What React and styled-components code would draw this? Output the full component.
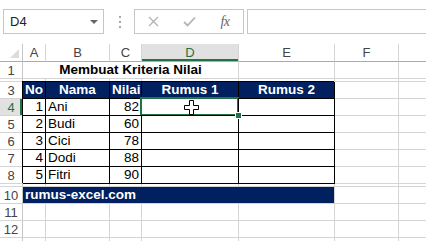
import React from 'react';
import styled, { createGlobalStyle, css } from 'styled-components';

const GlobalStyle = createGlobalStyle`
  html, body {
    margin: 0;
    padding: 0;
    background: #fff;
  }
  body {
    font-family: "Liberation Sans", Arial, sans-serif;
  }
`

const COLS = [23, 23, 64, 32, 97, 96, 64, 64];
const template = COLS.map(w => `${w}px`).join(' ');
const GREEN = '#217346';
const NAVY = '#002060';

const Window = styled.div`
  width: 426px;
  height: 241px;
  overflow: hidden;
  background: #fff;
`
const FormulaBar = styled.div`
  box-sizing: border-box;
  height: 44px;
  padding: 9px 0 0 3px;
  display: flex;
  align-items: flex-start;
`
const Field = styled.div`
  box-sizing: border-box;
  height: 25px;
  border: 1px solid #c6c6c6;
  flex-shrink: 0;
  display: flex;
  align-items: center;
`
const NameBox = styled(Field)`
  width: 101px;
  padding: 0 5px 0 6px;
  justify-content: space-between;
  font-size: 13px;
  color: #222;
`
const Caret = styled.span`
  width: 0;
  height: 0;
  border-left: 4px solid transparent;
  border-right: 4px solid transparent;
  border-top: 4px solid #666;
`
const Grip = styled.div`
  margin: 0 13px 0 15px;
  height: 25px;
  display: flex;
  flex-direction: column;
  justify-content: center;
  gap: 3px;
`
const GripDot = styled.span`
  width: 2px;
  height: 2px;
  background: #a8a8a8;
`
const ButtonGroup = styled(Field)`
  width: 110px;
`
const BarButton = styled.div`
  width: 36px;
  height: 100%;
  display: flex;
  align-items: center;
  justify-content: center;
`
const Fx = styled.span`
  font-family: "Liberation Serif", "Times New Roman", serif;
  font-style: italic;
  font-size: 14px;
  color: #666;
  letter-spacing: -0.5px;
`
const FormulaInput = styled(Field)`
  margin-left: 3px;
  width: 220px;
`

const Sheet = styled.div`
  display: flex;
  flex-direction: column;
`
const Row = styled.div`
  display: grid;
  grid-template-columns: ${template};
  height: ${p => p.$h}px;
`
const HeadBase = styled.div`
  box-sizing: border-box;
  display: flex;
  align-items: center;
  justify-content: center;
  font-size: 13px;
  color: #444;
  background: #fff;
`
const Corner = styled(HeadBase)`
  border-right: 1px solid #c6c6c6;
  border-bottom: 1px solid #ababab;
  align-items: flex-end;
  justify-content: flex-end;
  padding: 0 3px 3px 0;
`
const CornerMark = styled.span`
  width: 0;
  height: 0;
  border-left: 9px solid transparent;
  border-bottom: 9px solid #dcdcdc;
`
const ColHead = styled(HeadBase)`
  border-right: 1px solid #d5d5d5;
  border-bottom: 1px solid #ababab;
  ${p => p.$active && css`
    background: #e1e1e1;
    color: ${GREEN};
    box-shadow: inset 0 -2px 0 ${GREEN};
  `}
`
const RowHead = styled(HeadBase)`
  border-right: 1px solid #c6c6c6;
  border-bottom: 1px solid #d4d4d4;
  padding-top: 1px;
  ${p => p.$active && css`
    background: #e1e1e1;
    color: ${GREEN};
    box-shadow: inset -2px 0 0 ${GREEN};
  `}
`
const Cell = styled.div`
  box-sizing: border-box;
  position: relative;
  border-right: 1px solid #d4d4d4;
  border-bottom: 1px solid #d4d4d4;
  padding: 0 2px;
  font-size: 13.5px;
  line-height: ${p => p.$h - 1}px;
  white-space: nowrap;
  color: ${p => p.$color || '#000'};
  background: ${p => p.$fill || 'transparent'};
  font-weight: ${p => (p.$bold ? 700 : 400)};
  text-align: ${p => p.$align || 'left'};
  grid-column: span ${p => p.$span || 1};
  ${p => p.$boxed && css`
    border-right-color: #000;
    border-bottom-color: #000;
    box-shadow: -1px -1px 0 #000;
  `}
  ${p => p.$selected && css`
    &::after {
      content: '';
      position: absolute;
      top: -2px;
      left: -2px;
      right: -1px;
      bottom: -1px;
      border: 2px solid ${GREEN};
    }
  `}
`
const FillHandle = styled.span`
  position: absolute;
  right: -4px;
  bottom: -4px;
  width: 5px;
  height: 5px;
  background: ${GREEN};
  border: 1px solid #fff;
  z-index: 2;
`
const Pointer = styled.svg`
  position: absolute;
  left: 42px;
  top: 1px;
  z-index: 3;
`

const letters = ['A', 'B', 'C', 'D', 'E', 'F', ''];
const students = [
  [1, 'Ani', 82],
  [2, 'Budi', 60],
  [3, 'Cici', 78],
  [4, 'Dodi', 88],
  [5, 'Fitri', 90],
];
const H = 17;

const Blank = ({ count, h = H }) => Array.from({ length: count }).map((_, i) => <Cell key={i} $h={h} />);

const HiddenRow = () => (
  <Row $h={3}>
    <RowHead />
    <Blank count={7} h={3} />
  </Row>
)

const App = () => (
  <Window>
    <GlobalStyle />
    <FormulaBar>
      <NameBox>
        <span>D4</span>
        <Caret />
      </NameBox>
      <Grip>
        <GripDot />
        <GripDot />
        <GripDot />
      </Grip>
      <ButtonGroup>
        <BarButton>
          <svg width="11" height="11" viewBox="0 0 11 11">
            <path d="M1 1 L10 10 M10 1 L1 10" stroke="#b4b4b4" strokeWidth="1.4" fill="none" />
          </svg>
        </BarButton>
        <BarButton>
          <svg width="13" height="11" viewBox="0 0 13 11">
            <path d="M1 6 L4.5 9.5 L12 1.5" stroke="#b4b4b4" strokeWidth="1.8" fill="none" />
          </svg>
        </BarButton>
        <BarButton>
          <Fx>fx</Fx>
        </BarButton>
      </ButtonGroup>
      <FormulaInput />
    </FormulaBar>

    <Sheet>
      <Row $h={18}>
        <Corner><CornerMark /></Corner>
        {letters.map((l, i) => <ColHead key={i} $active={l === 'D'}>{l}</ColHead>)}
      </Row>

      <Row $h={H}>
        <RowHead>1</RowHead>
        <Cell $h={H} $span={4} $bold $align="center">Membuat Kriteria Nilai</Cell>
        <Blank count={3} />
      </Row>

      <HiddenRow />

      <Row $h={H}>
        <RowHead>3</RowHead>
        {['No', 'Nama', 'Nilai', 'Rumus 1', 'Rumus 2'].map(t => (
          <Cell key={t} $h={H} $boxed $bold $fill={NAVY} $color="#fff" $align="center">{t}</Cell>
        ))}
        <Blank count={2} />
      </Row>

      {students.map(([no, name, score], i) => (
        <Row key={no} $h={H}>
          <RowHead $active={i === 0}>{i + 4}</RowHead>
          <Cell $h={H} $boxed $align="right">{no}</Cell>
          <Cell $h={H} $boxed>{name}</Cell>
          <Cell $h={H} $boxed $align="right">{score}</Cell>
          <Cell $h={H} $boxed $selected={i === 0}>
            {i === 0 && (
              <>
                <FillHandle />
                <Pointer width="15" height="15" viewBox="0 0 15 15">
                  <path
                    d="M5.5 0.5 H9.5 V5.5 H14.5 V9.5 H9.5 V14.5 H5.5 V9.5 H0.5 V5.5 H5.5 Z"
                    fill="#fff"
                    stroke="#000"
                    strokeWidth="1"
                  />
                </Pointer>
              </>
            )}
          </Cell>
          <Cell $h={H} $boxed />
          <Blank count={2} />
        </Row>
      ))}

      <HiddenRow />

      <Row $h={H}>
        <RowHead>10</RowHead>
        <Cell $h={H} $span={5} $bold $fill={NAVY} $color="#fff">rumus-excel.com</Cell>
        <Blank count={2} />
      </Row>

      {[11, 12, null].map((n, i) => (
        <Row key={i} $h={H}>
          <RowHead>{n}</RowHead>
          <Blank count={7} />
        </Row>
      ))}
    </Sheet>
  </Window>
)

export default App;
